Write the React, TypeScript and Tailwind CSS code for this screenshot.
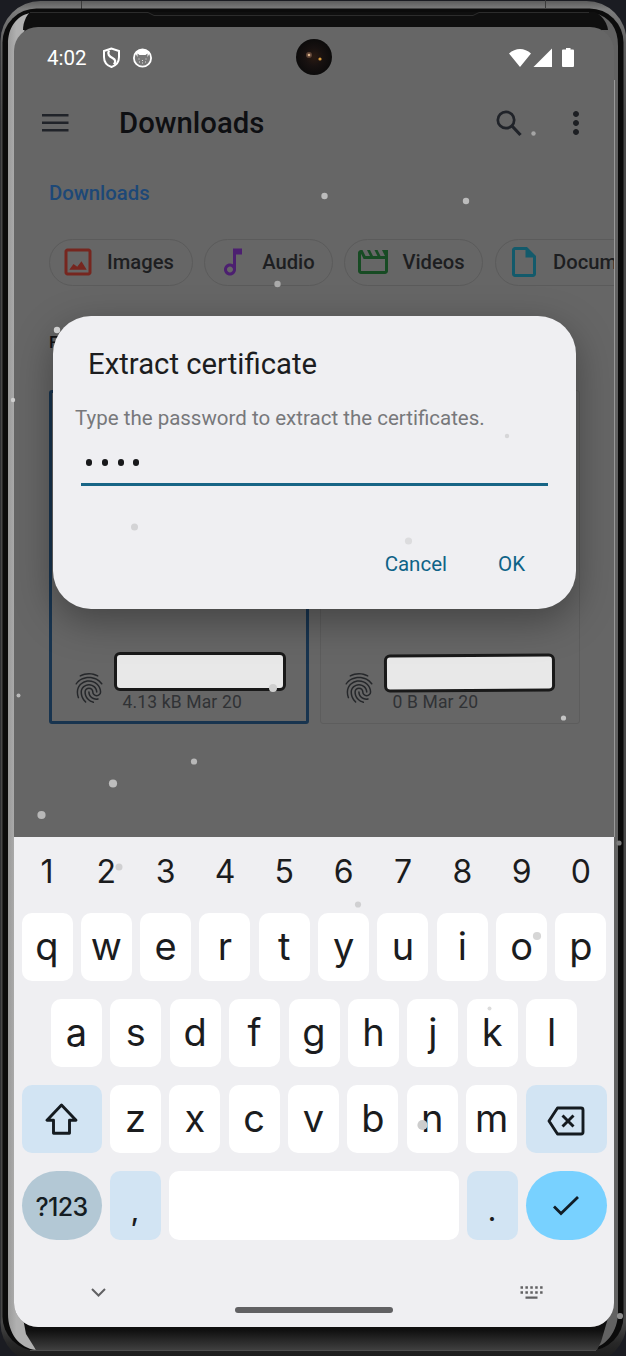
import React from "react";
import { MdFingerprint, MdMoreVert } from "react-icons/md";

const chips = [
  {
    label: "Images",
    width: "w-[143.500px]",
    color: "text-[#76261f]",
    path: "M19 5v14H5V5h14m0-2H5c-1.1 0-2 .9-2 2v14c0 1.1.9 2 2 2h14c1.1 0 2-.9 2-2V5c0-1.1-.9-2-2-2zM14.300 11.500l-2.800 3.700L9 13.300 6.200 17.200h11.600z",
  },
  {
    label: "Audio",
    width: "w-[128.500px]",
    color: "text-[#4c1f70]",
    path: "M12 3v10.55c-.59-.34-1.27-.55-2-.55-2.21 0-4 1.79-4 4s1.79 4 4 4 4-1.79 4-4V7h4V3h-6zm-2 16c-1.1 0-2-.9-2-2s.9-2 2-2 2 .9 2 2-.9 2-2 2z",
  },
  {
    label: "Videos",
    width: "w-[139px]",
    color: "text-[#174b23]",
    path: "M4 6.47L5.76 10H20v8H4V6.47M22 4h-4l2 4h-3l-2-4h-2l2 4h-3l-2-4H8l2 4H7L5 4H4c-1.1 0-1.99.9-1.99 2L2 18c0 1.1.9 2 2 2h16c1.1 0 2-.9 2-2V4z",
  },
  {
    label: "Documents",
    width: "w-[180px]",
    color: "text-[#135a6b]",
    path: "M14 2H6c-1.1 0-1.99.9-1.99 2L4 20c0 1.1.89 2 1.99 2H18c1.1 0 2-.9 2-2V8l-6-6zM6 20V4h7v5h5v11H6z",
  },
];

/* x, y, radius, colour */
const flakes: [number, number, number, string][] = [
  [533.5, 133.5, 2.2, "#a5a5a5"],
  [324.5, 196, 3.2, "#bcbcbc"],
  [466, 201, 3.2, "#bcbcbc"],
  [277.5, 284, 3.2, "#aaaaaa"],
  [57, 330, 3.2, "#cfcfcf"],
  [13, 400, 2.2, "#cfcfcf"],
  [507, 436, 2.2, "#d6d6d8"],
  [134.5, 527, 3.5, "#d3d3d5"],
  [408.5, 541, 3.6, "#dcdcde"],
  [273, 688, 4, "#cfcfcf"],
  [18.5, 695.5, 2, "#b9b9b9"],
  [563.5, 718, 2.6, "#c4c4c4"],
  [194, 761.5, 3.1, "#b8b8b8"],
  [113, 783.5, 4.1, "#bdbdbd"],
  [41.5, 815, 4.1, "#b8b8b8"],
  [619, 843, 2.6, "#7c7c7c"],
  [119, 867, 3.5, "#d0d0d2"],
  [358, 904.5, 3.1, "#d0d0d2"],
  [537, 936, 4.1, "#d6d6d6"],
  [489.5, 1008.5, 2, "#dcdcdc"],
  [422.5, 1125, 5.1, "#cdcdcd"],
  [620, 1316, 3.1, "#8e8e8e"],
];

function DeviceFrame() {
  return (
    <svg className="absolute inset-0" width="626" height="1356" viewBox="0 0 626 1356">
      <defs>
        <linearGradient id="rim" x1="0" x2="0" y1="0" y2="1">
          <stop offset="0" stopColor="#5c5c5c" />
          <stop offset="0.006" stopColor="#7d7d7d" />
          <stop offset="0.03" stopColor="#606060" />
          <stop offset="0.09" stopColor="#484848" />
          <stop offset="0.97" stopColor="#484848" />
          <stop offset="0.985" stopColor="#282828" />
          <stop offset="1" stopColor="#191919" />
        </linearGradient>
        <linearGradient id="glass" x1="0" x2="0" y1="0" y2="1">
          <stop offset="0" stopColor="#0d0d0d" />
          <stop offset="0.4" stopColor="#111111" />
          <stop offset="1" stopColor="#3f3f3f" />
        </linearGradient>
        <linearGradient id="leftEdge" x1="0" x2="1" y1="0" y2="0">
          <stop offset="0" stopColor="#9a9a9a" />
          <stop offset="0.300" stopColor="#b0b0b0" />
        </linearGradient>
      </defs>
      <rect width="626" height="1356" fill="#1b1c22" />
      <rect x="0.5" y="1" width="626" height="1362" rx="40" fill="url(#rim)" />
      <path d="M81.500 1v9M545.500 0v8" stroke="#3a3a3a" />
      <rect x="2.500" y="8.500" width="621" height="1342" rx="34" fill="#0b0b0b" />
      <path d="M30 13C16 16 8 28 8 44v1270c0 19 11 34 28 36L24 1322V32z" fill="url(#leftEdge)" />
      <path d="M594 13c16 4 24 15 24 33v1266c0 20-12 35-30 38l14-28V30z" fill="#626262" />
      <path d="M30 12h565c5 2 12 9 13 18H23c0-7 3-14 7-18z" fill="#0f0f0f" />
      <path d="M30 12.500h118l6 3h319l6-3h110" fill="none" stroke="#2c2c2c" />
      <path d="M23 1318h585l-7 24-4 8H36l-10-16z" fill="url(#glass)" />
      <path d="M30 1350.500h566" stroke="#4e4e4e" />
    </svg>
  );
}

function StatusBar() {
  return (
    <header className="flex h-[60px] items-center pl-[33px] pr-10 pt-[2px] text-white">
      <span className="w-[54.500px] text-[20.500px] leading-6">4:02</span>
      <svg className="mr-3" width="19" height="22" viewBox="0 0 19 22" fill="none" stroke="currentColor" strokeWidth="2">
        <path d="M9.500 1.500L2 4v6c0 5 3 8.500 7.500 10 4.500-1.500 7.500-5 7.500-10V4z" />
        <path d="M7 3.500c-2 4 .5 6 3.500 7.500s3.500 3.500 1.500 6.500" strokeWidth="2.300" />
      </svg>
      <svg width="20" height="20" viewBox="0 0 20 20">
        <circle cx="9.500" cy="10" r="8.600" fill="#777" stroke="white" strokeWidth="1.800" />
        <path d="M2.500 5.500C6 0 13 0 16.500 5.500L14.500 9V5.500l-2 1.500h-6l-2-1.500V9z" fill="white" />
        <path d="M5.500 11h1M12.500 11h1M6 14h1M9 15h1M12 14h1M9 12.500h1" stroke="#ddd" />
      </svg>
      <svg className="ml-auto" width="66" height="20" viewBox="0 0 66 20" fill="currentColor">
        <path d="M1 5.500C7.500-.5 16.500-.5 23 5.500L12 19zM44 .5V19H25.500zM58 0h4.500v1.500H65q1 0 1 1V18q0 1-1 1H55q-1 0-1-1V2.500q0-1 1-1h3z" />
      </svg>
    </header>
  );
}

function FileCard({ meta, selected }: { meta: string; selected?: boolean }) {
  return (
    <article
      className={
        selected
          ? "flex h-[334px] w-[260px] items-end rounded-[3px] border-[3px] border-[#18344f] pl-[19px]"
          : "flex h-[334px] w-[260px] items-end rounded-[3px] border-[1.500px] border-[#5d5d5d] pb-[2px] pl-[20px]"
      }
    >
      <MdFingerprint className="mb-[15px] size-9 text-[#25272a]" />
      <div className="mb-[8px] ml-[7px]">
        <div
          className={
            selected
              ? "mb-px h-[39px] w-[172px] rounded-[6px] border-[3.500px] border-[#191919] bg-[#e8e8e8]"
              : "h-[38px] w-[171px] -rotate-[0.3deg] rounded-[6px] border-[3.500px] border-[#191919] bg-[#e8e8e8]"
          }
        />
        <p className="-mt-px ml-[8.500px] whitespace-pre text-[17.500px] leading-[22px] tracking-[0.15px] text-[#303235]">{meta}</p>
      </div>
    </article>
  );
}

function Key({ label }: { label: string }) {
  return (
    <button className="flex h-[68px] w-[51px] items-center justify-center rounded-[10px] bg-white pb-[2px] font-['Inter',sans-serif] text-[38px] leading-none text-[#1b1c1e]">
      {label}
    </button>
  );
}

function Keyboard() {
  return (
    <section className="flex h-[490px] flex-col bg-[#efeff2] px-[7.500px] pt-[10px] text-[#1b1c1e]">
      <div className="mb-[18px] flex h-[48px] justify-between font-['Inter',sans-serif]">
        {"1234567890".split("").map((n) => (
          <span key={n} className="w-[51px] text-center text-[32px] leading-[49px]">{n}</span>
        ))}
      </div>
      <div className="flex flex-col gap-[18px]">
        <div className="flex justify-between">
          {"qwertyuiop".split("").map((k) => <Key key={k} label={k} />)}
        </div>
        <div className="flex justify-between px-[29.500px]">
          {"asdfghjkl".split("").map((k) => <Key key={k} label={k} />)}
        </div>
        <div className="flex justify-between">
          <button className="flex h-[68px] w-[80px] items-center justify-center rounded-[10px] bg-[#d2e4f3]">
            <svg width="34" height="34" viewBox="0 0 34 34" fill="none" stroke="#151b20" strokeWidth="2.900" strokeLinejoin="round">
              <path d="M16.500 3L2 18.200h6.500v13h16v-13H31z" />
            </svg>
          </button>
          {"zxcvbnm".split("").map((k) => <Key key={k} label={k} />)}
          <button className="flex h-[68px] w-[81px] items-center justify-center rounded-[10px] bg-[#d2e4f3]">
            <svg className="mt-[3px]" width="38" height="30" viewBox="0 0 38 30" fill="none" stroke="#151b20" strokeWidth="2.900" strokeLinejoin="round">
              <path d="M10.500 2H34q2 0 2 2v22q0 2-2 2H10.500L2 15zM15.500 9.500l11 11M26.500 9.500l-11 11" />
            </svg>
          </button>
        </div>
        <div className="flex justify-between">
          <button className="flex h-[69px] w-[80px] items-center justify-center rounded-full bg-[#b3c8d5] pt-1 font-['Inter',sans-serif] text-[25px] font-medium tracking-[-0.600px] text-[#151d23]">
            ?123
          </button>
          <button className="flex h-[69px] w-[51px] items-center justify-center rounded-[10px] bg-[#d2e4f3] pt-[10px] font-['Inter',sans-serif] text-[28px] font-medium">,</button>
          <button className="h-[69px] w-[290px] rounded-[10px] bg-white" />
          <button className="flex h-[69px] w-[51px] items-center justify-center rounded-[10px] bg-[#d2e4f3] pt-[10px] font-['Inter',sans-serif] text-[28px] font-medium">.</button>
          <button className="flex h-[69px] w-[81px] items-center justify-center rounded-full bg-[#78d1ff]">
            <svg width="26" height="20" viewBox="0 0 26 20" fill="none" stroke="#101d27" strokeWidth="2.800">
              <path d="M1 10.500l7 7L25 1" />
            </svg>
          </button>
        </div>
      </div>
      <div className="flex grow items-start justify-between pl-[69px] pr-[64px] pt-[46px]">
        <svg className="mt-[2px]" width="15" height="10" viewBox="0 0 15 10" fill="none" stroke="#616163" strokeWidth="2">
          <path d="M1 1l6.500 6.500L14 1" />
        </svg>
        <div className="ml-[3px] mt-[21px] h-[6px] w-[158px] rounded-full bg-[#616163]" />
        <svg width="23" height="13" viewBox="0 0 23 13" stroke="#616163" strokeWidth="2.500">
          <path d="M.5 1.500h23M.5 6.500h23" strokeDasharray="2.500 2.400" />
          <path d="M5.500 11.700h12" strokeWidth="2.200" />
        </svg>
      </div>
    </section>
  );
}

function CertificateDialog() {
  return (
    <section
      role="dialog"
      className="absolute left-[39px] top-[289px] flex h-[292.500px] w-[522.500px] flex-col rounded-[38px] bg-[#efeff2] shadow-[0_12px_38px_rgba(0,0,0,0.34)]"
    >
      <h2 className="pl-[35px] pt-[30px] text-[29.300px] leading-9 text-[#1c1d20]">Extract certificate</h2>
      <p className="pl-[22px] pt-[22px] text-[20.500px] leading-7 text-[#77787b]">Type the password to extract the certificates.</p>
      <div className="ml-7 mr-7 flex h-[54px] items-center gap-[9.800px] border-b-[3px] border-[#176586] pl-[5px] pt-[10px]">
        {[0, 1, 2, 3].map((i) => <i key={i} className="h-[7px] w-[6px] rounded-full bg-[#18191b]" />)}
      </div>
      <div className="mr-[50.500px] mt-auto flex justify-end gap-[51px] pb-[30.500px] text-[20.500px] leading-7 text-[#0e6387]">
        <button>Cancel</button>
        <button>OK</button>
      </div>
    </section>
  );
}

export default function App() {
  return (
    <div className="relative h-[1356px] w-[626px] overflow-hidden bg-[#1b1c22] pl-[14px] pt-[27px] font-['Roboto',sans-serif]">
      <DeviceFrame />
      <main className="relative flex h-[1300px] w-[600px] flex-col overflow-hidden rounded-[24px] bg-[#666666]">
        <StatusBar />
        <nav className="flex h-[72px] items-center pl-[28px] pr-5 text-[#1d1f23]">
          <svg width="27" height="20" viewBox="0 0 27 20" stroke="#202329" strokeWidth="2.600">
            <path d="M0 2.300h26.500M0 9.800h26.500M0 17.300h26.500" />
          </svg>
          <h1 className="ml-[50px] pt-[2px] text-[29.300px] font-medium text-[#0e0f12]">Downloads</h1>
          <svg className="ml-auto mr-[36px]" width="26" height="27" viewBox="0 0 26 27" fill="none" stroke="#202329" strokeWidth="2.700">
            <circle cx="10" cy="10" r="8.200" />
            <path d="M16 16l8.500 9" strokeWidth="3.200" />
          </svg>
          <MdMoreVert className="size-9" />
        </nav>
        <p className="mt-[20px] pl-[35px] text-[20.300px] font-medium leading-7 text-[#1d4877]">Downloads</p>
        <div className="mt-[32px] flex gap-[11.700px] pl-[35px]">
          {chips.map((c) => (
            <button key={c.label} className={`flex h-[47px] shrink-0 items-center rounded-full border-[1.500px] border-[#5b5b5b] pb-px pl-[10px] text-[20.200px] font-medium text-[#1d1e21] ${c.width}`}>
              <svg className={`mr-[11px] size-9 ${c.color}`} viewBox="0 0 24 24" fill="currentColor"><path d={c.path} /></svg>
              {c.label}
            </button>
          ))}
        </div>
        <div className="mt-[44px] h-6 pl-[35px] text-[17px] font-medium leading-6 text-[#111215]">Files</div>
        <div className="mt-[36px] flex gap-[11px] pl-[35px]">
          <FileCard meta="4.13 kB Mar 20" selected />
          <FileCard meta="0 B Mar 20" />
        </div>
        <div className="mt-auto"><Keyboard /></div>
        <CertificateDialog />
      </main>
      <svg className="pointer-events-none absolute inset-0" width="626" height="1356" viewBox="0 0 626 1356">
        <defs>
          <radialGradient id="lens">
            <stop offset="0" stopColor="#2a1a12" />
            <stop offset="0.5" stopColor="#171110" />
            <stop offset="1" stopColor="#0c0b0b" />
          </radialGradient>
        </defs>
        <circle cx="314" cy="57" r="18" fill="url(#lens)" />
        <circle cx="309" cy="55" r="3" fill="#5d4335" />
        <circle cx="309" cy="55" r="1.300" fill="#d9b48c" />
        <circle cx="320" cy="59" r="1.600" fill="#d79a3c" />
        <path d="M614.500 80v757" stroke="#999999" />
        {flakes.map(([x, y, r, fill]) => <circle key={`${x}-${y}`} cx={x} cy={y} r={r} fill={fill} />)}
      </svg>
    </div>
  );
}
